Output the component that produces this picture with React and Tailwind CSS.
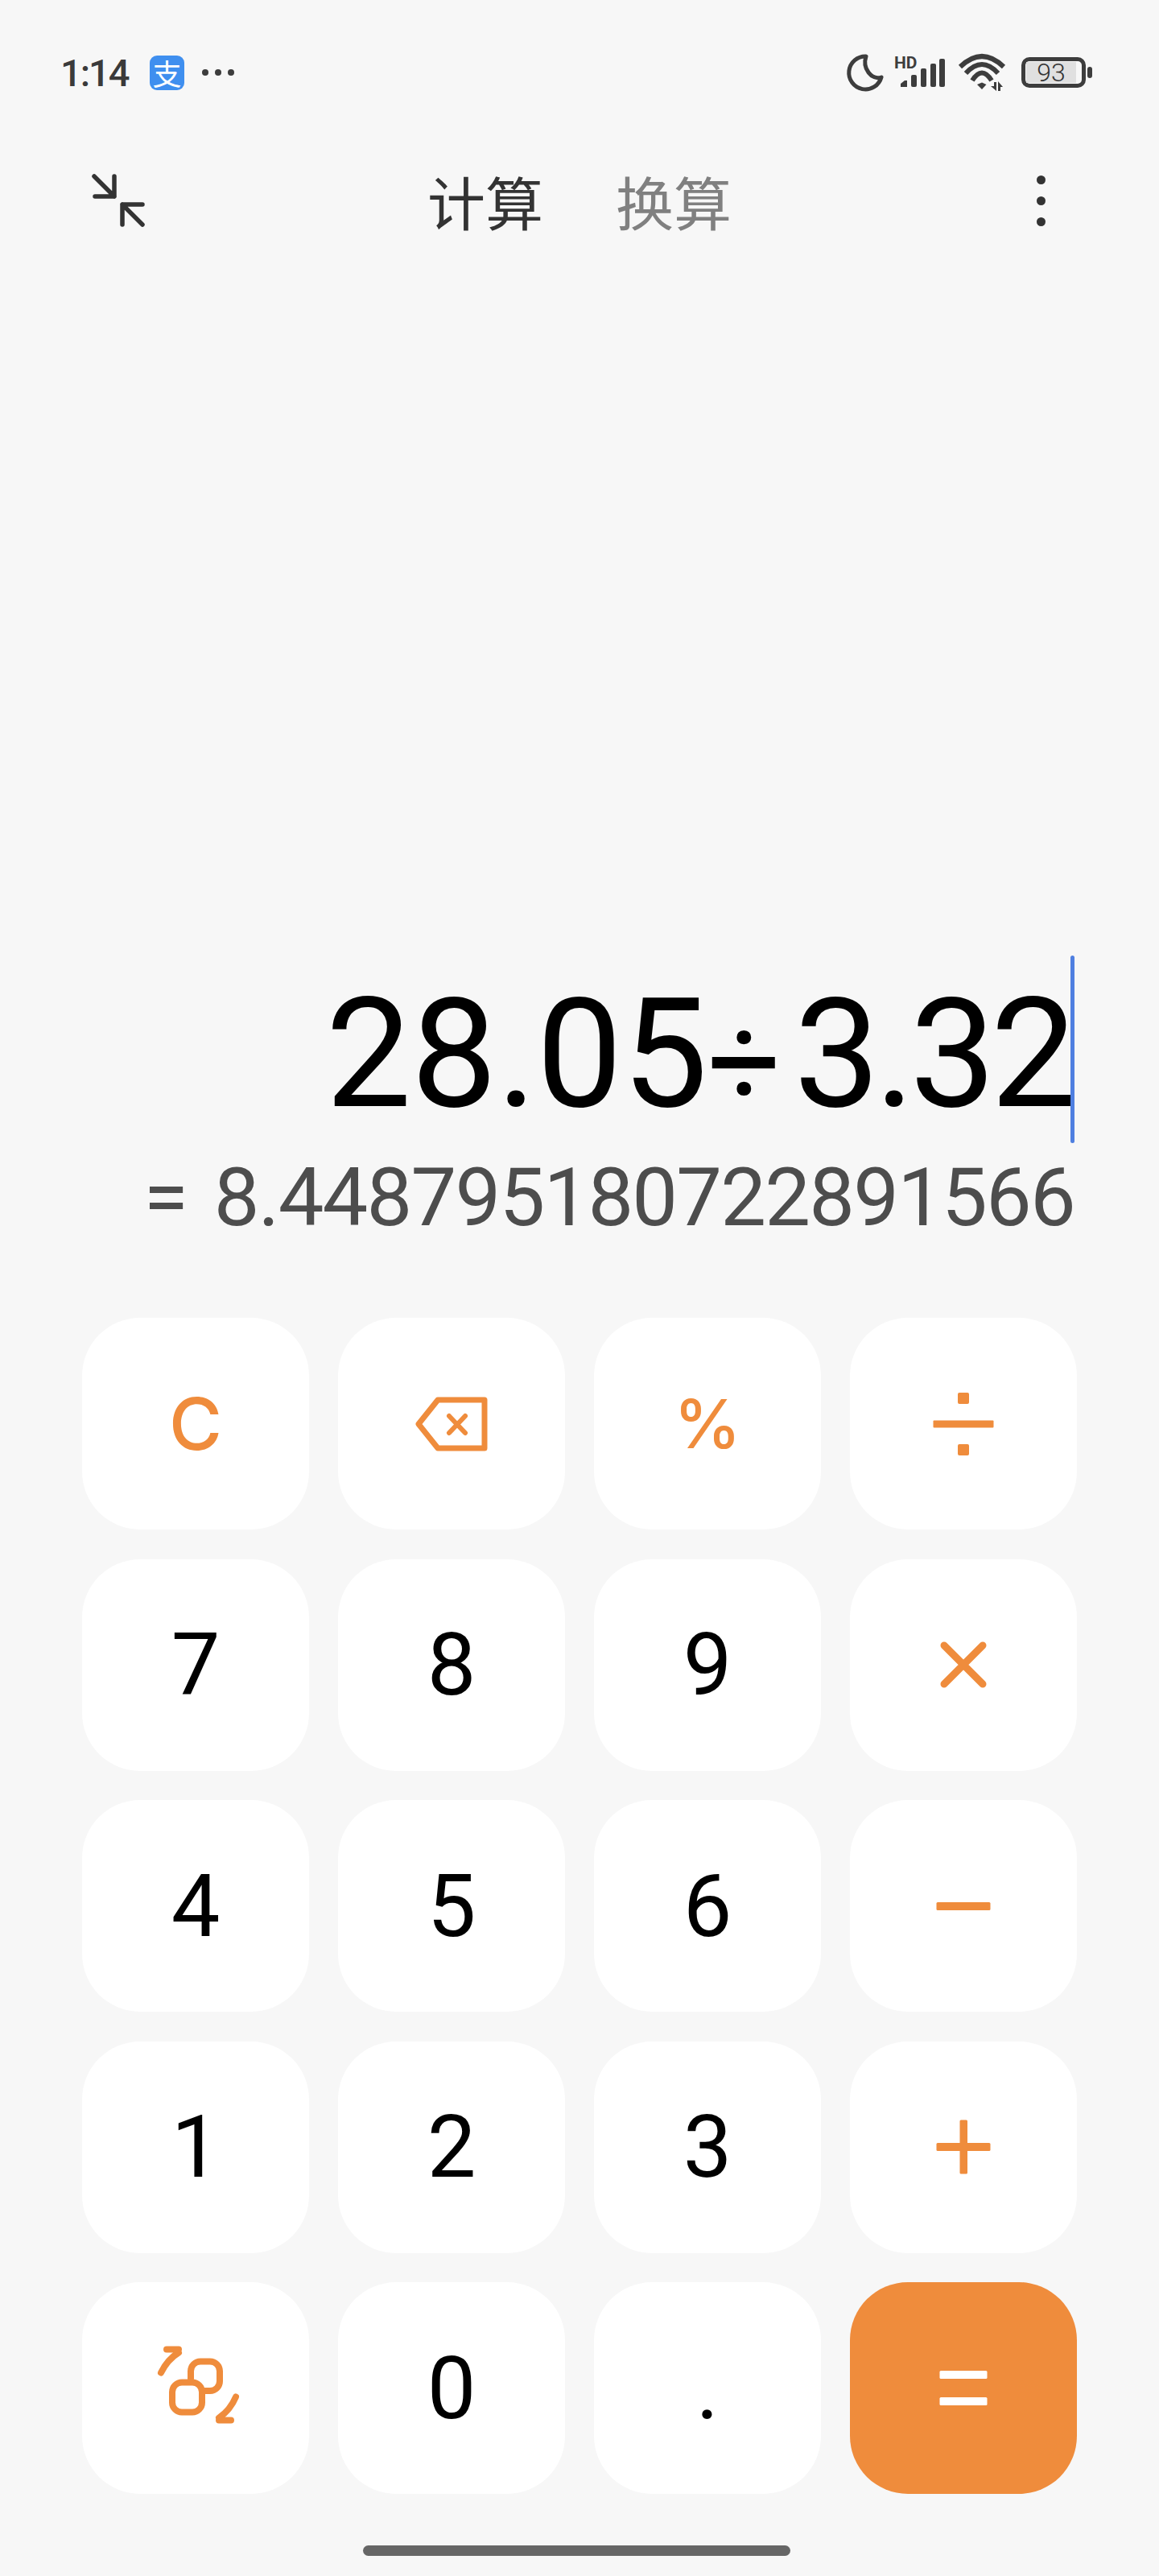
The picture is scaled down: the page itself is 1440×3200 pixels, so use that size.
const ORANGE = '#ef8c3c';

function Moon() {
  return (
    <svg width="50" height="50" viewBox="0 0 50 50" fill="none" stroke="#3d3d3d" strokeWidth="5" strokeLinejoin="round">
      <path d="M26 5 A20.5 20.5 0 1 0 45 31 C33 35 21 20 26 5 Z" />
    </svg>
  );
}

function Signal() {
  return (
    <div className="relative w-[70px] h-[50px]">
      <span className="absolute left-[3px] top-[3px] text-[21px] leading-[20px] font-bold text-[#3d3d3d]">HD</span>
      <svg width="70" height="50" viewBox="0 0 70 50" fill="#3d3d3d">
        <path d="M11 43 V39 L16 35 H19 V43 Z" />
        <rect x="24" y="28" width="7" height="15" rx="2" />
        <rect x="36" y="20" width="7" height="23" rx="2" />
        <rect x="48" y="14" width="7" height="29" rx="2" />
        <rect x="59" y="8" width="7" height="35" rx="2" />
      </svg>
    </div>
  );
}

function Wifi() {
  return (
    <svg width="60" height="50" viewBox="0 -3 60 50" fill="none" stroke="#3d3d3d" strokeWidth="6">
      <path d="M3 15 Q30 -11 57 15" />
      <path d="M10 23 Q30 1 50 23" />
      <path d="M18 32 Q30 13 42 32" />
      <path d="M24 37 L30 34.5 L35.5 37 L30 43 Z" fill="#3d3d3d" stroke="none" />
      <path d="M41 39 H45 V34 H48 V45 Z M50 45 V33 L56 40 H53 V45 Z" fill="#3d3d3d" stroke="none" />
    </svg>
  );
}

function Battery() {
  return (
    <div className="relative w-[94px] h-[50px]">
      <div className="absolute left-[3px] top-[6px] w-[80px] h-[38px] rounded-[10px] border-[5px] border-[#3d3d3d] p-[1px] pr-[7px]">
        <div className="h-[26px] w-full bg-[#e0e0e0] text-[#333] text-[32px] leading-[26px] text-center font-['Roboto',sans-serif] font-light">93</div>
      </div>
      <div className="absolute left-[85px] top-[18px] w-[6px] h-[14px] rounded-[3px] bg-[#3d3d3d]" />
    </div>
  );
}

function Minimize() {
  return (
    <svg width="70" height="70" viewBox="0 4 70 70" fill="none" stroke="#333" strokeWidth="5.5" strokeLinecap="round" strokeLinejoin="round">
      <path d="M5 9 L30 34 M30 9 V34 H6" />
      <path d="M40 44 L65 69 M40 69 V44 H65" />
    </svg>
  );
}

function Backspace() {
  return (
    <svg width="92" height="70" viewBox="0 0 92 70" fill="none" stroke={ORANGE} strokeLinejoin="round" strokeLinecap="round">
      <path d="M29 5 H87 V65 H29 L5 35 Z" strokeWidth="7" />
      <path d="M43 25 L63 46 M63 25 L43 46" strokeWidth="6" />
    </svg>
  );
}

function Divide() {
  return (
    <svg width="76" height="78" viewBox="0 0 76 78" fill={ORANGE}>
      <rect x="0.5" y="34.5" width="75" height="9" rx="1" />
      <rect x="31" y="0" width="14" height="14" rx="2" />
      <rect x="31" y="64" width="14" height="14" rx="2" />
    </svg>
  );
}

function Times() {
  return (
    <svg width="60" height="60" viewBox="0 0 60 60" fill="none" stroke={ORANGE} strokeWidth="9" strokeLinecap="round">
      <path d="M6 6 L54 54 M54 6 L6 54" />
    </svg>
  );
}

function Minus() {
  return (
    <svg width="68" height="10" viewBox="0 0 68 10" fill={ORANGE}>
      <rect x="0.5" y="0" width="67" height="10" rx="1.5" />
    </svg>
  );
}

function Plus() {
  return (
    <svg width="68" height="68" viewBox="0 0 68 68" fill={ORANGE}>
      <rect x="0.5" y="29" width="67" height="10" rx="1.5" />
      <rect x="29.5" y="0.5" width="9.5" height="67" rx="1.5" />
    </svg>
  );
}

function Equals() {
  return (
    <svg width="60" height="44" viewBox="0 0 60 44" fill="#fff">
      <rect x="0.5" y="0" width="59" height="10" rx="1.5" />
      <rect x="0.5" y="33" width="59" height="10" rx="1.5" />
    </svg>
  );
}

function Convert() {
  return (
    <svg width="120" height="120" viewBox="0 0 120 120" fill="none" stroke={ORANGE} strokeWidth="8" strokeLinecap="round">
      <path d="M54 48 V38.5 A12 12 0 0 1 66 26.5 H78 A12 12 0 0 1 90 38.5 V51 A12 12 0 0 1 78 63 H71" />
      <rect x="31" y="52.5" width="37" height="37" rx="12" />
      <path d="M17 40.5 Q25 24 39 15.5 M24 11.5 H39" />
      <path d="M110 70.5 Q103 87 89 96.5 M89 99.5 H104" />
    </svg>
  );
}

function Key({ children, accent }) {
  return (
    <button className={`flex items-center justify-center rounded-[72px] ${accent ? 'bg-[#ef8c3c]' : 'bg-white'}`}>
      {children}
    </button>
  );
}

function Num({ value }) {
  return <span className="text-[108px] leading-none text-black">{value}</span>;
}

function Op({ value, size }) {
  return <span className={`${size} leading-none font-medium text-[#ef8c3c] font-['Inter',sans-serif]`}>{value}</span>;
}

export default function App() {
  return (
    <div className="w-[1440px] h-[3200px] bg-[#f7f7f7] flex flex-col overflow-hidden font-['Roboto','Noto_Sans_CJK_SC',sans-serif]">
      {/* status bar */}
      <div className="flex items-center h-[50px] mt-[65px] pl-[75px] pr-[80px]">
        <span className="w-[111px] text-[47px] leading-none font-medium tracking-[-2px] text-[#3a3a3a]">1:14</span>
        <div className="w-[43px] h-[43px] rounded-[9px] bg-[#3f8fef] flex items-center justify-center text-white text-[36px] leading-none font-['Noto_Sans_CJK_SC',sans-serif]">
          支
        </div>
        <div className="flex gap-[8px] ml-[22px]">
          <div className="w-[8px] h-[8px] rounded-full bg-[#3d3d3d]" />
          <div className="w-[8px] h-[8px] rounded-full bg-[#3d3d3d]" />
          <div className="w-[8px] h-[8px] rounded-full bg-[#3d3d3d]" />
        </div>
        <div className="ml-auto flex items-center">
          <Moon />
          <div className="ml-[8px]"><Signal /></div>
          <div className="ml-[12px]"><Wifi /></div>
          <div className="ml-[16px]"><Battery /></div>
        </div>
      </div>

      {/* header */}
      <div className="flex items-center h-[120px] mt-[74px] pl-[112px] pr-[141px]">
        <Minimize />
        <div className="flex gap-[90px] ml-[349px] text-[72px] leading-none font-['Noto_Sans_CJK_SC',sans-serif]">
          <span className="text-[#333]">计算</span>
          <span className="text-[#808080]">换算</span>
        </div>
        <div className="ml-auto flex flex-col gap-[15px]">
          <div className="w-[11px] h-[11px] rounded-full bg-[#333]" />
          <div className="w-[11px] h-[11px] rounded-full bg-[#333]" />
          <div className="w-[11px] h-[11px] rounded-full bg-[#333]" />
        </div>
      </div>

      {/* display */}
      <div className="flex-1 flex flex-col justify-end items-end pr-[105px] pb-[85px]">
        <div className="flex items-center h-[233px] mb-[2px]">
          <div className="flex items-baseline pt-[10px] text-[190px] leading-none text-black">
            <span className="tracking-[-0.5px]">28.05</span>
            <span className="text-[160px] mr-[16px]">÷</span>
            <span className="tracking-[-6.5px]">3.32</span>
          </div>
          <div className="w-[5px] h-[233px] rounded-full bg-[#4f7fe0] -ml-[1px]" />
        </div>
        <div className="flex items-center h-[130px] gap-[32px] text-[101px] leading-none text-[#4d4d4d]">
          <span>=</span>
          <span className="tracking-[-1.8px]">8.448795180722891566</span>
        </div>
      </div>

      {/* keypad */}
      <div className="grid grid-cols-[repeat(4,282px)] auto-rows-[263px] gap-x-[36px] gap-y-[36.5px] px-[102px]">
        <Key><Op value="C" size="text-[90px]" /></Key>
        <Key><Backspace /></Key>
        <Key><Op value="%" size="text-[84px]" /></Key>
        <Key><Divide /></Key>
        <Key><Num value="7" /></Key>
        <Key><Num value="8" /></Key>
        <Key><Num value="9" /></Key>
        <Key><Times /></Key>
        <Key><Num value="4" /></Key>
        <Key><Num value="5" /></Key>
        <Key><Num value="6" /></Key>
        <Key><Minus /></Key>
        <Key><Num value="1" /></Key>
        <Key><Num value="2" /></Key>
        <Key><Num value="3" /></Key>
        <Key><Plus /></Key>
        <Key><Convert /></Key>
        <Key><Num value="0" /></Key>
        <Key><Num value="." /></Key>
        <Key accent><Equals /></Key>
      </div>

      {/* home indicator */}
      <div className="w-[531px] h-[13px] rounded-full bg-[#666] mt-[64px] mb-[25px] ml-[451px]" />
    </div>
  );
}
